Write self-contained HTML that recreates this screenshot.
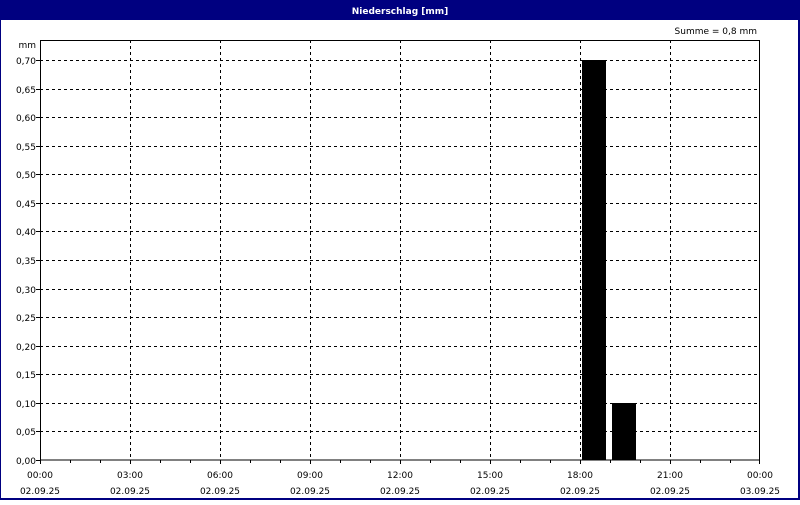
<!DOCTYPE html>
<html><head><style>
body{margin:0;width:800px;height:500px;overflow:hidden;background:#fff}
svg text{font-family:"DejaVu Sans","Liberation Sans",sans-serif;font-size:9px;fill:#000}
</style></head><body>
<svg width="800" height="500" xmlns="http://www.w3.org/2000/svg" shape-rendering="crispEdges">
<rect x="0" y="0" width="800" height="500" fill="#000080"/>
<rect x="1" y="20" width="797" height="478" fill="#fff"/>
<text x="400" y="14" text-anchor="middle" style="fill:#fff;font-weight:bold">Niederschlag [mm]</text>
<text x="757" y="34" text-anchor="end">Summe = 0,8 mm</text>
<g stroke="#000" stroke-width="1" stroke-dasharray="3,3">
<line x1="40" x2="760" y1="60.5" y2="60.5"/><line x1="40" x2="760" y1="89.5" y2="89.5"/><line x1="40" x2="760" y1="117.5" y2="117.5"/><line x1="40" x2="760" y1="146.5" y2="146.5"/><line x1="40" x2="760" y1="174.5" y2="174.5"/><line x1="40" x2="760" y1="203.5" y2="203.5"/><line x1="40" x2="760" y1="231.5" y2="231.5"/><line x1="40" x2="760" y1="260.5" y2="260.5"/><line x1="40" x2="760" y1="289.5" y2="289.5"/><line x1="40" x2="760" y1="317.5" y2="317.5"/><line x1="40" x2="760" y1="346.5" y2="346.5"/><line x1="40" x2="760" y1="374.5" y2="374.5"/><line x1="40" x2="760" y1="403.5" y2="403.5"/><line x1="40" x2="760" y1="431.5" y2="431.5"/>
<line x1="130.5" x2="130.5" y1="40" y2="460"/><line x1="220.5" x2="220.5" y1="40" y2="460"/><line x1="310.5" x2="310.5" y1="40" y2="460"/><line x1="400.5" x2="400.5" y1="40" y2="460"/><line x1="490.5" x2="490.5" y1="40" y2="460"/><line x1="580.5" x2="580.5" y1="40" y2="460"/><line x1="670.5" x2="670.5" y1="40" y2="460"/>
</g>
<rect x="582" y="60" width="24" height="400" fill="#000"/>
<rect x="612" y="403" width="24" height="57" fill="#000"/>
<rect x="40.5" y="40.5" width="719" height="419.5" fill="none" stroke="#000"/>
<g stroke="#000">
<path d="M40.5 460v4M70.5 460v3M100.5 460v3M130.5 460v4M160.5 460v3M190.5 460v3M220.5 460v4M250.5 460v3M280.5 460v3M310.5 460v4M340.5 460v3M370.5 460v3M400.5 460v4M430.5 460v3M460.5 460v3M490.5 460v4M520.5 460v3M550.5 460v3M580.5 460v4M610.5 460v3M640.5 460v3M670.5 460v4M700.5 460v3M730.5 460v3M759.5 460v4"/>
<path d="M36 60.5h4M36 89.5h4M36 117.5h4M36 146.5h4M36 174.5h4M36 203.5h4M36 231.5h4M36 260.5h4M36 289.5h4M36 317.5h4M36 346.5h4M36 374.5h4M36 403.5h4M36 431.5h4M36 460.5h4"/>
</g>
<g text-anchor="end">
<text x="36" y="48">mm</text>
<text x="36" y="64">0,70</text><text x="36" y="93">0,65</text><text x="36" y="121">0,60</text><text x="36" y="150">0,55</text><text x="36" y="178">0,50</text><text x="36" y="207">0,45</text><text x="36" y="235">0,40</text><text x="36" y="264">0,35</text><text x="36" y="293">0,30</text><text x="36" y="321">0,25</text><text x="36" y="350">0,20</text><text x="36" y="378">0,15</text><text x="36" y="407">0,10</text><text x="36" y="435">0,05</text><text x="36" y="464">0,00</text>
</g>
<g text-anchor="middle">
<text x="40" y="478">00:00</text><text x="40" y="494">02.09.25</text>
<text x="130" y="478">03:00</text><text x="130" y="494">02.09.25</text>
<text x="220" y="478">06:00</text><text x="220" y="494">02.09.25</text>
<text x="310" y="478">09:00</text><text x="310" y="494">02.09.25</text>
<text x="400" y="478">12:00</text><text x="400" y="494">02.09.25</text>
<text x="490" y="478">15:00</text><text x="490" y="494">02.09.25</text>
<text x="580" y="478">18:00</text><text x="580" y="494">02.09.25</text>
<text x="670" y="478">21:00</text><text x="670" y="494">02.09.25</text>
<text x="760" y="478">00:00</text><text x="760" y="494">03.09.25</text>
</g>
</svg>
</body></html>
